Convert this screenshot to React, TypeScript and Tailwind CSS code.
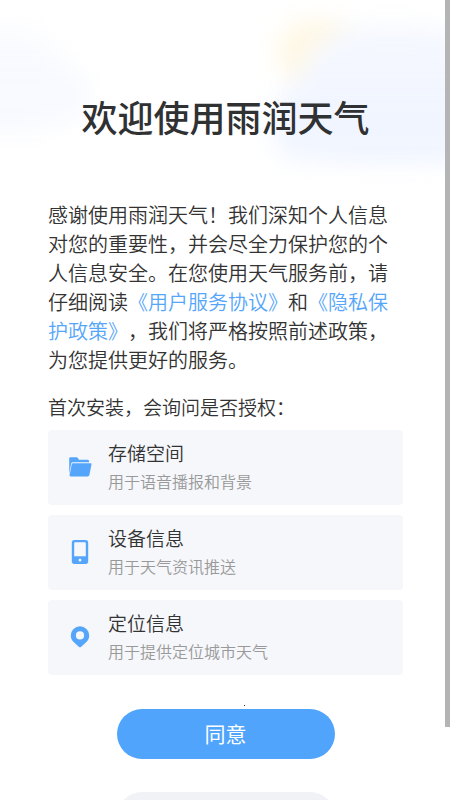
import React from "react";

const FolderIcon = () => (
  <svg viewBox="0 0 24 24" className="w-6 h-6" fill="#55a6fa" aria-hidden="true">
    <path d="M1.2 19V3.4Q1.2 2.2 2.4 2.2H8.6Q9.3 2.2 9.7 2.8L10.9 4.7H19.6Q21 4.7 21 6V7.2H5Q3.5 7.2 3.2 8.6Z" />
    <path d="M5 8.2H22.3Q23.8 8.2 23.5 9.6L21.4 20.1Q21.1 21.4 19.8 21.4H2.6Q1.3 21.4 1.6 20.1L3.7 9.4Q3.9 8.2 5 8.2Z" />
  </svg>
);

const PhoneIcon = () => (
  <svg viewBox="0 0 24 24" className="w-6 h-6" fill="#55a6fa" aria-hidden="true">
    <path
      fillRule="evenodd"
      d="M6.5 0H17.5Q20.2 0 20.2 2.7V21.3Q20.2 24 17.5 24H6.5Q3.8 24 3.8 21.3V2.7Q3.8 0 6.5 0ZM7.1 2.2Q6.2 2.2 6.2 3.1V16.2H17.8V3.1Q17.8 2.2 16.9 2.2ZM12 18.8A1.4 1.4 0 1 0 12 21.6A1.4 1.4 0 1 0 12 18.8Z"
    />
  </svg>
);

const PinIcon = () => (
  <svg viewBox="0 0 24 24" className="w-6 h-6" fill="#55a6fa" aria-hidden="true">
    <path
      fillRule="evenodd"
      d="M12 1.2A9.2 9.2 0 0 1 21.2 10.4C21.2 13 20 15.4 18.4 17L13.2 21.8Q12 22.8 10.8 21.8L5.6 17C4 15.4 2.8 13 2.8 10.4A9.2 9.2 0 0 1 12 1.2ZM12 6.3A4.1 4.1 0 1 0 12 14.5A4.1 4.1 0 1 0 12 6.3Z"
    />
  </svg>
);

const permissions = [
  { title: "存储空间", desc: "用于语音播报和背景", Icon: FolderIcon },
  { title: "设备信息", desc: "用于天气资讯推送", Icon: PhoneIcon },
  { title: "定位信息", desc: "用于提供定位城市天气", Icon: PinIcon },
];

const PermissionCard: React.FC<{
  title: string;
  desc: string;
  Icon: React.FC;
}> = ({ title, desc, Icon }) => (
  <li className="flex items-center gap-4 rounded-sm bg-[#f5f7fb] pl-5 pr-4 pt-[9px] pb-2.5">
    <Icon />
    <div>
      <h2 className="text-[19px] leading-7 font-[350] text-[#333333]">{title}</h2>
      <p className="text-base leading-7 font-[350] text-[#999999]">{desc}</p>
    </div>
  </li>
);

// Soft clouds and sun behind the title
const SkyBackdrop = () => (
  <div className="absolute inset-x-0 top-0 h-60 overflow-hidden" aria-hidden="true">
    <div className="absolute -left-24 top-8 w-40 h-24 rounded-full bg-[#f9faff] blur-lg" />
    <div className="absolute -left-20 top-18 w-42 h-12 rounded-full bg-[#f7f9ff] blur-md" />
    <div className="absolute right-24 top-5 w-19 h-16 rounded-full bg-[#fff8e4] blur-md" />
    <div className="absolute -right-10 top-7 w-48 h-32 rounded-full bg-[#f4f7ff] blur-md" />
    <div className="absolute -right-10 top-22 w-54 h-18 rounded-3xl bg-[#f0f5ff] blur-md" />
  </div>
);

export default function App() {
  return (
    <div className="relative h-screen overflow-hidden bg-white text-[#333333] font-['Noto_Sans_CJK_SC',sans-serif] [text-spacing-trim:space-all]">
      <SkyBackdrop />

      <main className="relative flex flex-col pl-12 pr-[47px] pt-[89px]">
        <h1 className="text-center text-4xl leading-[54px] font-medium text-[#303133]">
          欢迎使用雨润天气
        </h1>

        <p className="mt-[57px] text-xl leading-[29px] font-[350]">
          感谢使用雨润天气！我们深知个人信息对您的重要性，并会尽全力保护您的个人信息安全。在您使用天气服务前，请仔细阅读
          <a href="#agreement" className="text-[#55a6fa]">《用户服务协议》</a>
          和
          <a href="#privacy" className="text-[#55a6fa]">《隐私保护政策》</a>
          ，我们将严格按照前述政策，为您提供更好的服务。
        </p>

        <p className="mt-[19px] text-[19px] leading-7 font-[350]">首次安装，会询问是否授权：</p>

        <ul className="mt-[9px] flex flex-col gap-2.5">
          {permissions.map((item) => (
            <PermissionCard key={item.title} {...item} />
          ))}
        </ul>

        <div className="relative mt-[34px] flex flex-col items-center gap-[33px]">
          <span className="absolute -top-1 left-[196px] w-px h-px bg-[#223355]" />
          <button
            type="button"
            className="w-[218px] h-[50px] rounded-full bg-[#50a4fb] pb-0.5 text-[21px] leading-8 text-white"
          >
            同意
          </button>
          <button
            type="button"
            aria-label="不同意"
            className="w-[218px] h-[50px] rounded-full bg-[#f1f2f5]"
          />
        </div>
      </main>

      {/* Scroll thumb */}
      <div className="absolute right-0 top-0 w-[5px] h-[727px] bg-[#b4b4b4]" />
    </div>
  );
}
